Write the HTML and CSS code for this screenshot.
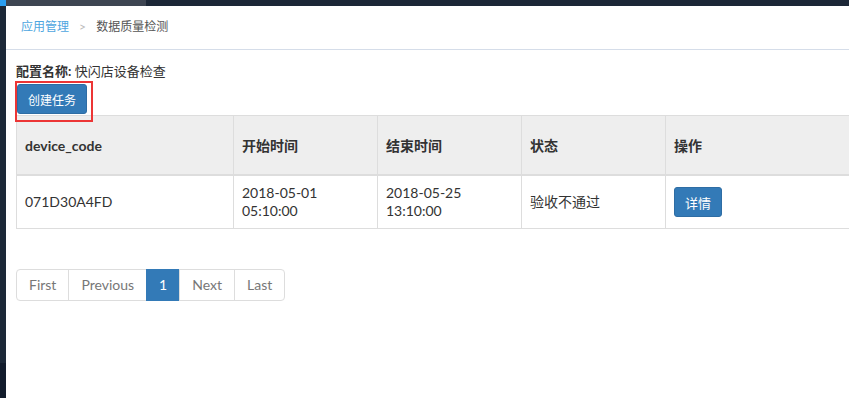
FILE: index.html
```html
<!DOCTYPE html>
<html lang="zh-CN">
<head>
    <meta charset="UTF-8">
    <meta name="viewport" content="width=device-width, initial-scale=1.0">
    <title>数据质量检测</title>
    <link rel="stylesheet" href="styles.css">
</head>
<body>

    <div class="topbar">
        <div class="topbar-logo"></div>
        <div class="topbar-brand"></div>
        <div class="topbar-rest"></div>
    </div>

    <div class="layout">
        <div class="sidebar"></div>

        <div class="content">
            <div class="breadcrumb">
                <a href="#">应用管理</a>
                <span class="sep">&gt;</span>
                <span class="current">数据质量检测</span>
            </div>

            <div class="panel">
                <p class="config-name"><b>配置名称:</b> 快闪店设备检查</p>

                <div class="highlight">
                    <button class="btn">创建任务</button>
                </div>

                <table>
                    <thead>
                        <tr>
                            <th class="col-code">device_code</th>
                            <th class="col-time">开始时间</th>
                            <th class="col-time">结束时间</th>
                            <th class="col-time">状态</th>
                            <th>操作</th>
                        </tr>
                    </thead>
                    <tbody>
                        <tr>
                            <td>071D30A4FD</td>
                            <td>2018-05-01 05:10:00</td>
                            <td>2018-05-25 13:10:00</td>
                            <td>验收不通过</td>
                            <td><button class="btn btn-sm">详情</button></td>
                        </tr>
                    </tbody>
                </table>

                <ul class="pagination">
                    <li><a href="#">First</a></li>
                    <li><a href="#">Previous</a></li>
                    <li class="active"><a href="#">1</a></li>
                    <li><a href="#">Next</a></li>
                    <li><a href="#">Last</a></li>
                </ul>
            </div>
        </div>
    </div>

</body>
</html>
```

FILE: styles.css
```css
body {
    margin: 0;
    font-family: Lato, "Noto Sans CJK SC", sans-serif;
    font-size: 14px;
    color: #333;
    background: #fff;
    overflow: hidden;
}
.topbar {
    display: flex;
    height: 6px;
}
.topbar-logo {
    width: 6px;
    background: #2b9ef0;
}
.topbar-brand {
    width: 140px;
    background: #3d4552;
}
.topbar-rest {
    flex: 1;
    background: #1c2737;
}
.layout {
    display: flex;
    height: 392px;
}
.sidebar {
    width: 6px;
    background: linear-gradient(#1c2838 0, #1c2838 357px, #121c2c 357px);
}
.content {
    flex: 1;
    overflow: hidden;
}
.breadcrumb {
    height: 44px;
    box-sizing: border-box;
    padding: 12px 15px 0;
    font-size: 12px;
    line-height: 17px;
    border-bottom: 1px solid #d5dde9;
}
.breadcrumb a {
    color: #4ea6e0;
    text-decoration: none;
}
.breadcrumb .sep {
    color: #bbb;
    margin: 0 7px;
}
.breadcrumb .current {
    color: #555;
}
.panel {
    padding: 0 10px;
}
.config-name {
    margin: 11px 0 0;
    font-size: 13px;
    line-height: 20px;
}
.highlight {
    position: relative;
    display: inline-block;
    margin-top: 3px;
    vertical-align: top;
}
.highlight::after {
    content: "";
    position: absolute;
    left: -1px;
    top: -3px;
    width: 78px;
    height: 41px;
    box-sizing: border-box;
    border: 2px solid #ec3535;
}
.btn {
    display: block;
    margin-left: 1px;
    height: 30px;
    padding: 0 10px;
    font-family: Lato, "Noto Sans CJK SC", sans-serif;
    font-size: 12px;
    color: #fff;
    background-color: #337ab7;
    border: 1px solid #2e6da4;
    border-radius: 3px;
    cursor: pointer;
}
.btn-sm {
    margin-left: 0;
    height: 30px;
    padding: 0 10px;
    font-size: 13px;
}
table {
    width: 1000px;
    border-collapse: collapse;
    margin-top: 1px;
}
th, td {
    border: 1px solid #ddd;
    text-align: left;
    padding: 8px 8px;
    line-height: 18px;
    vertical-align: middle;
}
th {
    background-color: #eee;
    padding: 21px 8px 19px;
    border-bottom-width: 2px;
    font-weight: bold;
}
td {
    height: 36px;
}
.col-code {
    width: 200px;
}
.col-time {
    width: 127px;
}
.pagination {
    display: flex;
    list-style: none;
    margin: 40px 0 0;
    padding: 0;
}
.pagination li a {
    display: block;
    padding: 6px 12px;
    line-height: 18px;
    color: #777;
    text-decoration: none;
    border: 1px solid #ddd;
    margin-left: -1px;
}
.pagination li:first-child a {
    margin-left: 0;
    border-radius: 4px 0 0 4px;
}
.pagination li:last-child a {
    border-radius: 0 4px 4px 0;
}
.pagination li.active a {
    background-color: #337ab7;
    border-color: #337ab7;
    color: #fff;
}
```
